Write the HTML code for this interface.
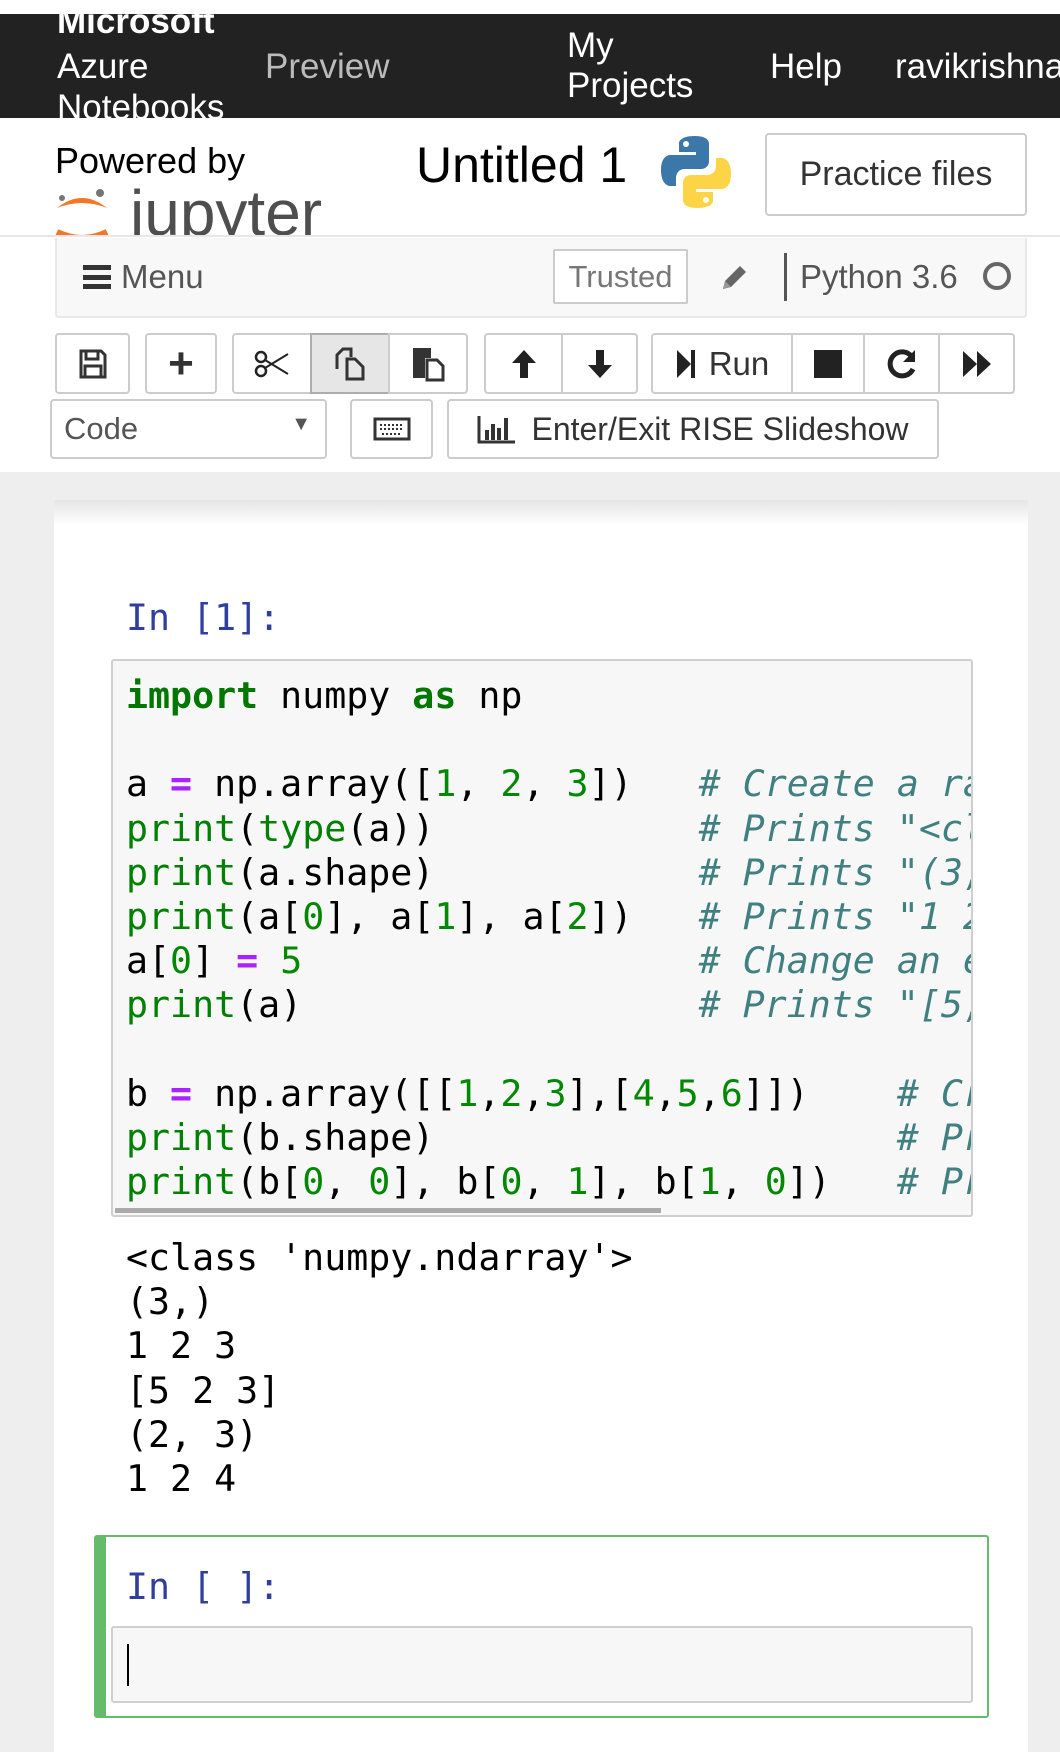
<!DOCTYPE html>
<html><head><meta charset="utf-8">
<style>
*{margin:0;padding:0;box-sizing:border-box}
body{width:1060px;height:1752px;overflow:hidden;background:#eee;font-family:"Liberation Sans",sans-serif;position:relative}
.a{position:absolute;white-space:nowrap}
.nav{color:#fff;font-size:35px;line-height:40px}
.btn{position:absolute;border:2px solid #ccc;border-radius:4px;background:#fff;display:flex;align-items:center;justify-content:center;color:#333}
.mono{font-family:"DejaVu Sans Mono",monospace;font-size:36.6px;line-height:44.2px;white-space:pre}
.k{color:#007700;font-weight:bold}.o{color:#aa22ff;font-weight:bold}.n{color:#080}.b{color:#008000}.c{color:#408080;font-style:italic}
</style></head><body>
<div class="a" style="left:0;top:0;width:1060px;height:14px;background:#fff"></div>
<div class="a" style="left:0;top:14px;width:1060px;height:104px;background:#222;overflow:hidden">
 <div class="a nav" style="left:57px;top:-12px;font-weight:bold">Microsoft</div>
 <div class="a nav" style="left:57px;top:33px">Azure</div>
 <div class="a nav" style="left:57px;top:74px">Notebooks</div>
 <div class="a nav" style="left:265px;top:33px;color:#bbb">Preview</div>
 <div class="a nav" style="left:567px;top:12px">My</div>
 <div class="a nav" style="left:567px;top:52px">Projects</div>
 <div class="a nav" style="left:770px;top:33px">Help</div>
 <div class="a nav" style="left:895px;top:33px">ravikrishna</div>
</div>
<div class="a" style="left:0;top:118px;width:1060px;height:354px;background:#fff"></div>
<div class="a" style="left:55px;top:140px;font-size:36px;color:#000">Powered by</div>
<div class="a" style="left:52px;top:186px;width:60px;height:50px;overflow:hidden">
 <svg width="60" height="50"><path d="M5 22 Q30 2 55 22 Q30 12 5 22Z" fill="#f37726"/><circle cx="10" cy="12" r="3" fill="#767677"/><circle cx="48" cy="7" r="4" fill="#767677"/><path d="M5 46 Q30 58 55 46" stroke="#f37726" stroke-width="6" fill="none"/></svg>
</div>
<div class="a" style="left:130px;top:176px;font-size:64px;color:#4e4e4e;height:60px;overflow:hidden;line-height:74px">jupyter</div>
<div class="a" style="left:0;top:235px;width:1060px;height:2px;background:#e7e7e7"></div>
<div class="a" style="left:416px;top:136px;font-size:50px;color:#000">Untitled 1</div>
<svg class="a" style="left:659px;top:134px" width="74" height="76" viewBox="0 0 74 76">
 <path d="M36 2c-16 0-16 7-16 7v9h17v3H12S2 20 2 36s9 16 9 16h6v-8s0-9 9-9h16s8 0 8-8V10s1-8-14-8z" fill="#3b77a8"/>
 <path d="M38 74c16 0 16-7 16-7v-9H37v-3h25s10 1 10-15-9-16-9-16h-6v8s0 9-9 9H32s-8 0-8 8v17s-1 8 14 8z" fill="#fdd445"/>
 <circle cx="27" cy="10" r="3" fill="#fff"/><circle cx="47" cy="66" r="3" fill="#fff"/>
</svg>
<div class="btn" style="left:765px;top:133px;width:262px;height:83px;font-size:34px">Practice files</div>
<div class="a" style="left:55px;top:238px;width:972px;height:80px;background:#f8f8f8;border:2px solid #e7e7e7;border-top:none;border-radius:0 0 4px 4px"></div>
<div class="a" style="left:83px;top:265px;width:28px;height:24px;border-top:5px solid #333;border-bottom:5px solid #333"><div style="margin-top:4.5px;height:5px;background:#333"></div></div>
<div class="a" style="left:121px;top:259px;font-size:33px;color:#555;line-height:36px">Menu</div>
<div class="btn" style="left:553px;top:249px;width:135px;height:55px;font-size:31px;color:#777;border-radius:2px">Trusted</div>
<svg class="a" style="left:720px;top:262px" width="30" height="30" viewBox="0 0 30 30"><path d="M3 27l2-8L20 4l6 6L11 25z" fill="#666"/><path d="M3 27l2-8 6 6z" fill="#999"/></svg>
<div class="a" style="left:784px;top:253px;width:3px;height:48px;background:#555"></div>
<div class="a" style="left:800px;top:258px;font-size:33px;color:#555">Python 3.6</div>
<div class="a" style="left:983px;top:262px;width:28px;height:28px;border:4px solid #666;border-radius:50%"></div>

<div class="btn" style="left:55px;top:333px;width:75px;height:61px"><svg width="30" height="32" viewBox="0 0 30 32"><path d="M3 3h20l4 4v22H3z M8 3v8h12V3 M7 29V18h16v11" fill="none" stroke="#333" stroke-width="3"/></svg></div>
<div class="btn" style="left:145px;top:333px;width:72px;height:61px;font-size:44px;font-weight:bold">+</div>
<div class="btn" style="left:232px;top:333px;width:80px;height:61px;border-radius:4px 0 0 4px"><svg width="36" height="28" viewBox="0 0 36 28"><circle cx="7" cy="7" r="5" fill="none" stroke="#222" stroke-width="2.5"/><circle cx="7" cy="21" r="5" fill="none" stroke="#222" stroke-width="2.5"/><path d="M11 10L34 24M11 18L34 4" stroke="#222" stroke-width="2"/></svg></div>
<div class="btn" style="left:310px;top:333px;width:80px;height:61px;border-radius:0;background:#e6e6e6;border-color:#adadad"><svg width="34" height="34" viewBox="0 0 34 34"><path d="M4 22V8l6-6h8v8M14 12h8l8 8v12H14z" fill="none" stroke="#333" stroke-width="3"/></svg></div>
<div class="btn" style="left:388px;top:333px;width:80px;height:61px;border-radius:0 4px 4px 0"><svg width="34" height="36" viewBox="0 0 34 36"><path d="M2 2h18v10h-6v20H2z" fill="#333"/><path d="M16 14h10l6 6v14H16z" fill="#fff" stroke="#333" stroke-width="3"/></svg></div>
<div class="btn" style="left:484px;top:333px;width:79px;height:61px;border-radius:4px 0 0 4px"><svg width="30" height="32" viewBox="0 0 30 32"><path d="M15 2L3 15h8v15h8V15h8z" fill="#222"/></svg></div>
<div class="btn" style="left:561px;top:333px;width:77px;height:61px;border-radius:0 4px 4px 0"><svg width="30" height="32" viewBox="0 0 30 32"><path d="M15 30L3 17h8V2h8v15h8z" fill="#222"/></svg></div>
<div class="btn" style="left:651px;top:333px;width:142px;height:61px;border-radius:4px 0 0 4px;font-size:33px"><svg width="22" height="32" viewBox="0 0 22 32" style="margin-right:12px"><path d="M2 2l14 14L2 30z" fill="#222"/><rect x="16" y="2" width="4" height="28" fill="#222"/></svg>Run</div>
<div class="btn" style="left:791px;top:333px;width:74px;height:61px;border-radius:0"><div style="width:28px;height:28px;background:#222"></div></div>
<div class="btn" style="left:863px;top:333px;width:77px;height:61px;border-radius:0"><svg width="32" height="32" viewBox="0 0 32 32"><path d="M26 9A12 12 0 1 0 27 21" fill="none" stroke="#222" stroke-width="5"/><path d="M29 2v12H17z" fill="#222"/></svg></div>
<div class="btn" style="left:938px;top:333px;width:77px;height:61px;border-radius:0 4px 4px 0"><svg width="32" height="30" viewBox="0 0 32 30"><path d="M2 2l14 13L2 28zM16 2l14 13-14 13z" fill="#222"/></svg></div>

<div class="btn" style="left:50px;top:399px;width:277px;height:60px;justify-content:flex-start;padding-left:12px;font-size:31px;color:#555">Code<span style="position:absolute;right:14px;top:12px;font-size:20px;color:#555">&#9660;</span></div>
<div class="btn" style="left:350px;top:399px;width:83px;height:60px"><svg width="38" height="24" viewBox="0 0 38 24"><rect x="2" y="2" width="34" height="20" fill="none" stroke="#333" stroke-width="3"/><path d="M7 8h24M7 12h24M9 17h20" stroke="#333" stroke-width="2" stroke-dasharray="2 2"/></svg></div>
<div class="btn" style="left:447px;top:399px;width:492px;height:60px;font-size:32px"><svg width="38" height="30" viewBox="0 0 38 30" style="margin-right:16px"><path d="M2 2v26h36" fill="none" stroke="#333" stroke-width="3"/><rect x="8" y="16" width="4" height="10" fill="#333"/><rect x="14" y="10" width="4" height="16" fill="#333"/><rect x="20" y="14" width="4" height="12" fill="#333"/><rect x="27" y="4" width="4" height="22" fill="#333"/></svg>Enter/Exit RISE Slideshow</div>

<div class="a" style="left:54px;top:500px;width:974px;height:1252px;background:#fff"></div>
<div class="a" style="left:54px;top:500px;width:974px;height:26px;background:linear-gradient(#e6e6e6,#fff)"></div>
<div class="a mono" style="left:126px;top:596px;color:#303f9f">In [1]:</div>
<div class="a" style="left:111px;top:659px;width:862px;height:558px;background:#f7f7f7;border:2px solid #cfcfcf;border-radius:3px;overflow:hidden">
<div class="a mono" style="left:13px;top:13px;color:#000"><span class="k">import</span> numpy <span class="k">as</span> np

a <span class="o">=</span> np.array([<span class="n">1</span>, <span class="n">2</span>, <span class="n">3</span>])   <span class="c"># Create a rank 1 array</span>
<span class="b">print</span>(<span class="b">type</span>(a))            <span class="c"># Prints "&lt;class</span>
<span class="b">print</span>(a.shape)            <span class="c"># Prints "(3,)"</span>
<span class="b">print</span>(a[<span class="n">0</span>], a[<span class="n">1</span>], a[<span class="n">2</span>])   <span class="c"># Prints "1 2 3"</span>
a[<span class="n">0</span>] <span class="o">=</span> <span class="n">5</span>                  <span class="c"># Change an element</span>
<span class="b">print</span>(a)                  <span class="c"># Prints "[5, 2, 3]"</span>

b <span class="o">=</span> np.array([[<span class="n">1</span>,<span class="n">2</span>,<span class="n">3</span>],[<span class="n">4</span>,<span class="n">5</span>,<span class="n">6</span>]])    <span class="c"># Create</span>
<span class="b">print</span>(b.shape)                     <span class="c"># Prints</span>
<span class="b">print</span>(b[<span class="n">0</span>, <span class="n">0</span>], b[<span class="n">0</span>, <span class="n">1</span>], b[<span class="n">1</span>, <span class="n">0</span>])   <span class="c"># Prints</span></div>
<div class="a" style="left:2px;bottom:2px;width:546px;height:5px;background:#aaa"></div>
</div>
<div class="a mono" style="left:126px;top:1236px;color:#000">&lt;class 'numpy.ndarray'&gt;
(3,)
1 2 3
[5 2 3]
(2, 3)
1 2 4</div>
<div class="a" style="left:94px;top:1535px;width:895px;height:183px;border:2px solid #66bb6a;border-left:12px solid #66bb6a;border-radius:3px"></div>
<div class="a mono" style="left:126px;top:1565px;color:#303f9f">In [ ]:</div>
<div class="a" style="left:111px;top:1626px;width:862px;height:77px;background:#f7f7f7;border:2px solid #cfcfcf;border-radius:3px"></div>
<div class="a" style="left:127px;top:1644px;width:2px;height:42px;background:#000"></div>
</body></html>
